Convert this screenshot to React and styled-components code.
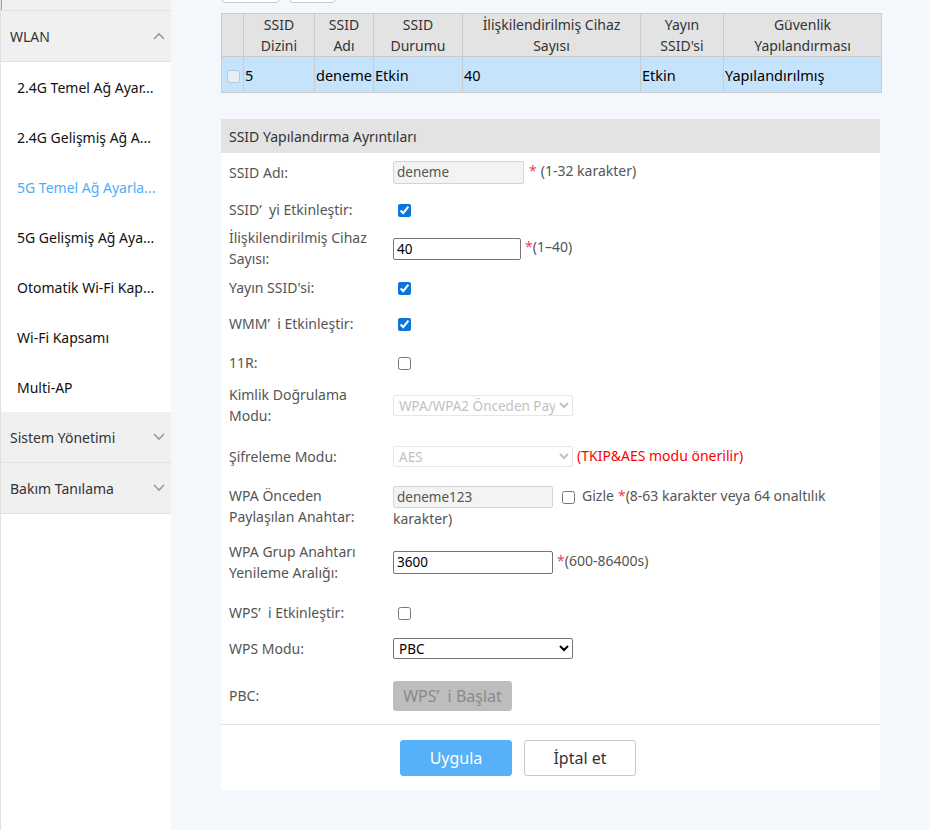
import styled, { createGlobalStyle } from "styled-components";

const GlobalStyle = createGlobalStyle`
  html, body {
    margin: 0;
    padding: 0;
    background: #f4f7fc;
    font-family: "Noto Sans", "Open Sans", Arial, sans-serif;
    font-size: 14px;
  }
`;

const Page = styled.div`
  display: flex;
  min-height: 830px;
`;

const Sidebar = styled.nav`
  width: 170px;
  flex-shrink: 0;
  background: #fff;
  border-left: 1px solid #e2e2e2;
`;

const GroupHeader = styled.div`
  height: ${(p) => p.$h || 50}px;
  display: flex;
  align-items: center;
  justify-content: space-between;
  padding: 0 6px 0 9px;
  background: #f0f0f0;
  border-bottom: 1px solid #e2e2e2;
  color: #333;
  font-size: 14px;
  box-shadow: ${(p) => (p.$active ? "inset 1px 0 0 #5ab4f8" : "none")};
`;

const NavItem = styled.div`
  height: 50px;
  display: flex;
  align-items: center;
  padding-left: 16px;
  font-size: 14px;
  color: ${(p) => (p.$active ? "#4fadf7" : "#111")};
  white-space: nowrap;
  overflow: hidden;
`;

const Chevron = ({ up }) => (
  <svg width="12" height="8" viewBox="0 0 12 8">
    <polyline
      points={up ? "1,7 6,2 11,7" : "1,1 6,6 11,1"}
      fill="none"
      stroke="#9a9a9a"
      strokeWidth="1.6"
    />
  </svg>
);

const Main = styled.main`
  flex: 1;
  padding-left: 50px;
  padding-right: 49px;
  padding-bottom: 40px;
`;

const ToolRow = styled.div`
  height: 3px;
  overflow: hidden;
  display: flex;
  align-items: flex-end;
  gap: 9px;
  margin-bottom: 10px;
`;

const ToolButton = styled.div`
  width: ${(p) => p.$w}px;
  height: 28px;
  flex-shrink: 0;
  box-sizing: border-box;
  background: #fff;
  border: 1px solid #c8c8c8;
  border-radius: 4px;
`;

const Table = styled.table`
  width: 660px;
  border-collapse: collapse;
  table-layout: fixed;
  font-size: 14px;
  margin-bottom: 26px;
`;

const Th = styled.th`
  height: 42px;
  padding: 0;
  background: #e3e3e3;
  border: 1px solid #cbcbcb;
  color: #333;
  font-weight: normal;
  line-height: 21px;
  text-align: center;
`;

const Td = styled.td`
  height: 35px;
  padding: 0 0 0 1px;
  background: #c5e4fb;
  border: 1px solid #cbcbcb;
  color: #000;
  font-size: 14.5px;
  white-space: nowrap;
`;

const RowBox = styled.input`
  width: 13px;
  height: 13px;
  margin: 0 0 0 4px;
  vertical-align: middle;
`;

const Panel = styled.section`
  width: 659px;
  background: #fff;
`;

const PanelTitle = styled.div`
  height: 34px;
  display: flex;
  align-items: center;
  padding-left: 8px;
  background: #e3e3e3;
  color: #333;
  font-size: 14px;
`;

const FormRow = styled.div`
  height: ${(p) => p.$h}px;
  display: flex;
  align-items: ${(p) => (p.$top ? "flex-start" : "center")};
  padding-left: 8px;
  box-sizing: border-box;
`;

const Label = styled.div`
  width: 150px;
  padding-right: 14px;
  flex-shrink: 0;
  color: #555;
  font-size: 14px;
  line-height: 21px;
`;

const Control = styled.div`
  flex: 1;
  color: #555;
  font-size: 14px;
  line-height: 21px;
  padding-right: 20px;
`;

const TextInput = styled.input`
  width: ${(p) => p.$w}px;
  height: ${(p) => p.$h || 23}px;
  box-sizing: border-box;
  padding: 0 3px;
  font-family: "Noto Sans", Arial, sans-serif;
  font-size: 13.5px;
  vertical-align: middle;
  border-radius: 2px;
  color: ${(p) => (p.$locked ? "#555" : "#000")};
  background: ${(p) => (p.$locked ? "#f3f3f3" : "#fff")};
  border: 1px solid ${(p) => (p.$locked ? "#d4d4d4" : "#767676")};
  outline: none;
`;

const Select = styled.select`
  width: 180px;
  height: 21px;
  box-sizing: border-box;
  font-family: "Noto Sans", Arial, sans-serif;
  font-size: 13.5px;
  vertical-align: middle;
  border-radius: 2px;
  padding: 0 1px;
  color: ${(p) => (p.disabled ? "#a8a8a8" : "#000")};
  background: #fff;
  border: 1px solid ${(p) => (p.disabled ? "#dcdcdc" : "#767676")};
`;

const Check = styled.input`
  width: 13px;
  height: 13px;
  margin: 0 0 0 ${(p) => p.$gap ?? 5}px;
  vertical-align: middle;
  accent-color: #0b75d8;
`;

const Hint = styled.span`
  margin-left: ${(p) => p.$gap ?? 0}px;
  color: #555;
`;

const Star = styled.span`
  margin-left: ${(p) => p.$gap ?? 4}px;
  color: #f23e62;
`;

const Warn = styled.span`
  margin-left: 4px;
  color: #f00;
`;

const GrayButton = styled.button`
  width: 119px;
  height: 30px;
  border: none;
  border-radius: 3px;
  background: #bdbdbd;
  color: #8a8a8a;
  font-family: "Noto Sans", Arial, sans-serif;
  font-size: 16px;
  padding: 0;
`;

const Footer = styled.div`
  border-top: 1px solid #e4e4e4;
  display: flex;
  gap: 12px;
  padding: 15px 0 14px 179px;
`;

const ActionButton = styled.button`
  width: 112px;
  height: 36px;
  border-radius: 3px;
  font-family: "Noto Sans", Arial, sans-serif;
  font-size: 16px;
  padding: 0;
  background: ${(p) => (p.$primary ? "#56b1f9" : "#fff")};
  color: ${(p) => (p.$primary ? "#fff" : "#333")};
  border: 1px solid ${(p) => (p.$primary ? "#56b1f9" : "#c8c8c8")};
`;

const navItems = [
  "2.4G Temel Ağ Ayar...",
  "2.4G Gelişmiş Ağ A...",
  "5G Temel Ağ Ayarla...",
  "5G Gelişmiş Ağ Aya...",
  "Otomatik Wi-Fi Kap...",
  "Wi-Fi Kapsamı",
  "Multi-AP",
];

const columns = [
  { w: 22, title: "" },
  { w: 71, title: ["SSID", "Dizini"] },
  { w: 59, title: ["SSID", "Adı"] },
  { w: 89, title: ["SSID", "Durumu"] },
  { w: 178, title: ["İlişkilendirilmiş Cihaz", "Sayısı"] },
  { w: 83, title: ["Yayın", "SSID'si"] },
  { w: 158, title: ["Güvenlik", "Yapılandırması"] },
];

export default function App() {
  return (
    <>
      <GlobalStyle />
      <Page>
        <Sidebar>
          <GroupHeader $h={10} $active />
          <GroupHeader>
            WLAN <Chevron up />
          </GroupHeader>
          {navItems.map((item, i) => (
            <NavItem key={item} $active={i === 2}>
              {item}
            </NavItem>
          ))}
          <GroupHeader>
            Sistem Yönetimi <Chevron />
          </GroupHeader>
          <GroupHeader>
            Bakım Tanılama <Chevron />
          </GroupHeader>
        </Sidebar>

        <Main>
          <ToolRow>
            <ToolButton $w={59} />
            <ToolButton $w={47} />
          </ToolRow>

          <Table>
            <colgroup>
              {columns.map((c, i) => (
                <col key={i} style={{ width: c.w }} />
              ))}
            </colgroup>
            <thead>
              <tr>
                {columns.map((c, i) => (
                  <Th key={i}>
                    {c.title && (
                      <>
                        {c.title[0]}
                        <br />
                        {c.title[1]}
                      </>
                    )}
                  </Th>
                ))}
              </tr>
            </thead>
            <tbody>
              <tr>
                <Td>
                  <RowBox type="checkbox" disabled />
                </Td>
                <Td>5</Td>
                <Td>deneme</Td>
                <Td>Etkin</Td>
                <Td>40</Td>
                <Td>Etkin</Td>
                <Td>Yapılandırılmış</Td>
              </tr>
            </tbody>
          </Table>

          <Panel>
            <PanelTitle>SSID Yapılandırma Ayrıntıları</PanelTitle>

            <FormRow $h={38}>
              <Label>SSID Adı:</Label>
              <Control>
                <TextInput $w={131} $locked defaultValue="deneme" readOnly />
                <Star $gap={5}>*</Star>
                <Hint $gap={4}>(1-32 karakter)</Hint>
              </Control>
            </FormRow>

            <FormRow $h={36}>
              <Label>SSID’&nbsp; yi Etkinleştir:</Label>
              <Control>
                <Check type="checkbox" defaultChecked />
              </Control>
            </FormRow>

            <FormRow $h={42}>
              <Label>İlişkilendirilmiş Cihaz Sayısı:</Label>
              <Control>
                <TextInput $w={128} $h={22} defaultValue="40" />
                <Star>*</Star>
                <Hint>(1–40)</Hint>
              </Control>
            </FormRow>

            <FormRow $h={36}>
              <Label>Yayın SSID'si:</Label>
              <Control>
                <Check type="checkbox" defaultChecked />
              </Control>
            </FormRow>

            <FormRow $h={36}>
              <Label>WMM’&nbsp; i Etkinleştir:</Label>
              <Control>
                <Check type="checkbox" defaultChecked />
              </Control>
            </FormRow>

            <FormRow $h={42}>
              <Label>11R:</Label>
              <Control>
                <Check type="checkbox" />
              </Control>
            </FormRow>

            <FormRow $h={44}>
              <Label>Kimlik Doğrulama Modu:</Label>
              <Control>
                <Select disabled defaultValue="psk">
                  <option value="psk">WPA/WPA2 Önceden Paylaşılan Anahtar</option>
                </Select>
              </Control>
            </FormRow>

            <FormRow $h={58}>
              <Label>Şifreleme Modu:</Label>
              <Control>
                <Select disabled defaultValue="aes">
                  <option value="aes">AES</option>
                </Select>
                <Warn>(TKIP&amp;AES modu önerilir)</Warn>
              </Control>
            </FormRow>

            <FormRow $h={44} $top>
              <Label>WPA Önceden Paylaşılan Anahtar:</Label>
              <Control>
                <TextInput $w={160} $h={22} $locked defaultValue="deneme123" readOnly />
                <Check type="checkbox" $gap={9} />
                <Hint $gap={7}>Gizle</Hint>
                <Star>*</Star>
                <Hint>(8-63 karakter veya 64 onaltılık</Hint>
                <br />
                <Hint>karakter)</Hint>
              </Control>
            </FormRow>

            <FormRow $h={66}>
              <Label>WPA Grup Anahtarı Yenileme Aralığı:</Label>
              <Control>
                <TextInput $w={160} defaultValue="3600" />
                <Star>*</Star>
                <Hint>(600-86400s)</Hint>
              </Control>
            </FormRow>

            <FormRow $h={34}>
              <Label>WPS’&nbsp; i Etkinleştir:</Label>
              <Control>
                <Check type="checkbox" />
              </Control>
            </FormRow>

            <FormRow $h={38}>
              <Label>WPS Modu:</Label>
              <Control>
                <Select defaultValue="pbc">
                  <option value="pbc">PBC</option>
                  <option value="pin">PIN</option>
                </Select>
              </Control>
            </FormRow>

            <FormRow $h={57}>
              <Label>PBC:</Label>
              <Control>
                <GrayButton disabled>WPS’&nbsp; i Başlat</GrayButton>
              </Control>
            </FormRow>

            <Footer>
              <ActionButton $primary>Uygula</ActionButton>
              <ActionButton>İptal et</ActionButton>
            </Footer>
          </Panel>
        </Main>
      </Page>
    </>
  );
}
